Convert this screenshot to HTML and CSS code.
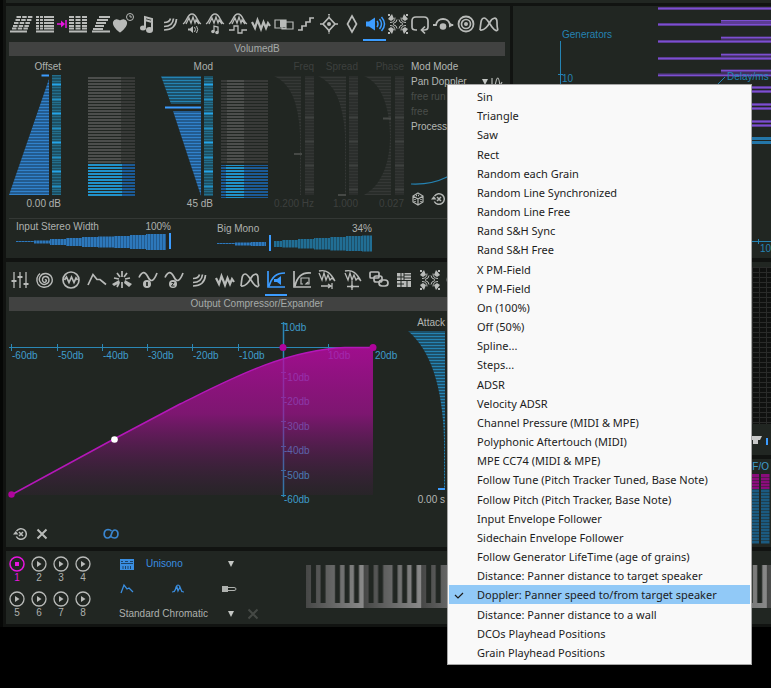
FILE: index.html
```html
<!DOCTYPE html>
<html lang="en">
<head>
<meta charset="utf-8">
<title>Granular Synthesizer</title>
<link rel="stylesheet" href="styles.css">
</head>
<body>
<svg class="defs" aria-hidden="true">
  <defs>
    <pattern id="p-blue" width="60" height="3" patternUnits="userSpaceOnUse"><rect width="60" height="3" fill="#235b8f"/><rect width="60" height="1" fill="#3182cc"/></pattern>
    <pattern id="p-teal" width="60" height="3" patternUnits="userSpaceOnUse"><rect width="60" height="3" fill="#1d5069"/><rect width="60" height="1" fill="#2583b3"/></pattern>
    <pattern id="p-bar" width="10" height="29" patternUnits="userSpaceOnUse"><rect width="10" height="29" fill="#1d5063"/><path d="M0 1.500H10M0 4.500H10M0 7.500H10M0 13.500H10M0 16.500H10M0 19.500H10M0 22.500H10M0 28.500H10" stroke="#236e8c"/><path d="M0 10.500H10" stroke="#25a5e8" stroke-width="2"/><path d="M0 25.500H10" stroke="#2290c4" stroke-width="2"/></pattern>
    <pattern id="p-dim" width="60" height="3" patternUnits="userSpaceOnUse"><rect width="60" height="3" fill="#292d2a"/><rect width="60" height="1" fill="#353836"/></pattern>
    <pattern id="p-dimbar" width="10" height="24" patternUnits="userSpaceOnUse"><rect width="10" height="24" fill="#2b2e2c"/><path d="M0 1.500H10M0 4.500H10M0 7.500H10M0 10.500H10M0 13.500H10M0 16.500H10M0 22.500H10" stroke="#333634"/><path d="M0 19.500H10" stroke="#3e413f" stroke-width="2"/></pattern>
    <pattern id="p-gray" width="60" height="3" patternUnits="userSpaceOnUse"><rect width="60" height="2" fill="#4c4e4c"/></pattern>
    <pattern id="p-gray2" width="60" height="3" patternUnits="userSpaceOnUse"><rect width="60" height="2" fill="#383a38"/></pattern>
    <pattern id="p-lit" width="60" height="3" patternUnits="userSpaceOnUse"><rect width="60" height="2" fill="#2191c9"/></pattern>
    <pattern id="p-lit2" width="60" height="3" patternUnits="userSpaceOnUse"><rect width="60" height="2" fill="#1b5a96"/></pattern>
    <pattern id="p-vblue" width="3" height="20" patternUnits="userSpaceOnUse"><rect width="3" height="20" fill="#235b8f"/><rect width="2" height="20" fill="#2d78bb"/></pattern>
    <pattern id="p-vteal" width="3" height="20" patternUnits="userSpaceOnUse"><rect width="3" height="20" fill="#1d5069"/><rect width="2" height="20" fill="#216e94"/></pattern>
    <pattern id="p-keys" width="57.600" height="43" patternUnits="userSpaceOnUse">
      <rect width="58" height="43" fill="url(#keyshade)"/>
      <path d="M5 0h5v38h-5zM14.500 0h5v38h-5zM29 0h5v38h-5zM38.500 0h5v38h-5zM48 0h5v38h-5z" fill="#212622"/>
    </pattern>
    <linearGradient id="keyshade"><stop offset="0" stop-color="#464746"/><stop offset="1" stop-color="#8a8a8a"/></linearGradient>
    <linearGradient id="fillfade" x1="0" y1="0" x2="0" y2="1"><stop offset="0" stop-color="#bf08a8" stop-opacity=".8"/><stop offset=".45" stop-color="#a80f95" stop-opacity=".68"/><stop offset="1" stop-color="#5a1a58" stop-opacity=".12"/></linearGradient>
    <pattern id="p-cells" width="7" height="5" patternUnits="userSpaceOnUse"><rect width="7" height="5" fill="#101110"/><path d="M0 .5H7M1.500 0V5" stroke="#2a2b2a"/></pattern>

    <symbol id="i-slant" viewBox="0 0 24 22"><path d="M7.500 4h16M6.500 7h16M5 10h16M4 13h16M3 15.500h16" stroke-width="1.800" stroke-dasharray="4.500 1.200"/><path d="M1 18.500h17" stroke-width="2"/></symbol>
    <symbol id="i-rows" viewBox="0 0 24 22"><path d="M3 4h18M3 7h18M3 10h18M3 13h18M3 15.500h18" stroke-width="1.800" stroke-dasharray="3 1 3 1 10 0"/><path d="M3 18.500h18" stroke-width="2"/></symbol>
    <symbol id="i-arrowin" viewBox="0 0 10 22"><path d="M0 11h6M9 7v8" stroke-width="1.500"/><path d="M4 7.500v7l4-3.500z" fill="currentColor" stroke="none"/></symbol>
    <symbol id="i-cells" viewBox="0 0 24 22"><path d="M3 4h18M3 7h18M3 10h18M3 13h18M3 15.500h18" stroke-width="1.800" stroke-dasharray="5 1.500"/><path d="M3 18.500h18" stroke-width="2"/></symbol>
    <symbol id="i-shear" viewBox="0 0 24 22"><path d="M10 4h11M8 7h11M7 10h10M6 13h9M4 16h10M3 18.500h18" stroke-width="1.800"/></symbol>
    <symbol id="i-heart" viewBox="0 0 24 22"><path d="M8 18.500C-3 10 3 4.500 8 8.500 13 4.500 19 10 8 18.500z" fill="currentColor"/><circle cx="18" cy="4" r="3.500" stroke-width="1"/><path d="M18 2v2h2" stroke-width="1"/></symbol>
    <symbol id="i-note" viewBox="0 0 24 22"><path d="M10 14V4l7 2v11M10 7l7 2" stroke-width="2"/><ellipse cx="8" cy="15" rx="3" ry="2.500" fill="currentColor" stroke="none"/><ellipse cx="14.500" cy="17" rx="3.500" ry="3" fill="currentColor" stroke="none"/></symbol>
    <symbol id="i-waves" viewBox="0 0 24 22"><path d="M6 9.500c4 0 6-2 6.500-4M6 13.500c6 0 9-3 9.500-8M6 17c9 0 12-5 12.500-11"/></symbol>
    <symbol id="i-moda" viewBox="0 0 24 22"><path d="M3 11C7 9 7 1 12 1s5 8 9 10M6 11l3-6 2 5 2-6 2 6 1-3 3 4" stroke-width="1.300"/><path d="M8 15.500h2l3-2.500v7l-3-2.500H8z" fill="currentColor" stroke="none"/><path d="M14.500 14q2 2.500 0 5M16.500 13q2.500 3.500 0 7" stroke-width="1"/></symbol>
    <symbol id="i-modb" viewBox="0 0 24 22"><path d="M3 11C7 9 7 1 12 1s5 8 9 10M6 11l3-6 2 5 2-6 2 6 1-3 3 4M11 18v-5l4 1v5" stroke-width="1.300"/><circle cx="10" cy="18.500" r="1.800" fill="currentColor" stroke="none"/><circle cx="14" cy="19.500" r="1.800" fill="currentColor" stroke="none"/></symbol>
    <symbol id="i-modc" viewBox="0 0 24 22"><path d="M3 11C7 9 7 1 12 1s5 8 9 10M6 11l3-6 2 5 2-6 2 6 1-3 3 4M3 17h5v-4h4v7h4v-3h5" stroke-width="1.300"/></symbol>
    <symbol id="i-zig" viewBox="0 0 24 22"><path d="M3 9l3 6 2.500-8L12 16l2.500-7 2.500 6 2-5 2 3" stroke-width="2.200"/></symbol>
    <symbol id="i-blend" viewBox="0 0 24 22"><path d="M3 7h11v8H3zM10 9h11v7H10z" stroke-width="1.200"/><path d="M8 7h6v7H8z" fill="currentColor" stroke="none"/></symbol>
    <symbol id="i-steps" viewBox="0 0 24 22"><path d="M4 17h4v-4h4V9h4V5h4"/></symbol>
    <symbol id="i-target" viewBox="0 0 24 22"><path d="M12 4.500l6 6.500-6 6.500L6 11zM3 11h3M18 11h3"/><path d="M12 1v3M12 18v3" stroke-dasharray="1.500 1"/><circle cx="12" cy="11" r="2" fill="currentColor" stroke="none"/></symbol>
    <symbol id="i-diamond" viewBox="0 0 24 22"><path d="M12 3l4.500 8L12 19l-4.500-8z"/></symbol>
    <symbol id="i-speaker" viewBox="0 0 24 22"><path d="M3 8.500h3l6-4v13l-6-4H3z" fill="currentColor" stroke="none"/><path d="M14 8q2 3 0 6M16.500 6q4 5 0 10M18.500 4q6 7 0 14" stroke-width="1.500"/></symbol>
    <symbol id="i-quad" viewBox="0 0 24 22"><g id="corner"><path d="M2 6l4-5 2 5-3 2zM2 1h2v2H2z" fill="currentColor" stroke="none"/><path d="M4 9.500q5 0 5-5M7 10.500q4-1 4-4" stroke-width="1"/></g><use href="#corner" transform="matrix(-1 0 0 1 24 0)"/><use href="#corner" transform="matrix(1 0 0 -1 0 22)"/><use href="#corner" transform="matrix(-1 0 0 -1 24 22)"/></symbol>
    <symbol id="i-loop" viewBox="0 0 24 22"><path d="M9 17H8c-3 0-4-1-4-3V8c0-3 1-4 4-4h8c3 0 4 1 4 4v6c0 2-1 3-4 3h-2M17 13.500L13.500 17l3.500 3.500"/></symbol>
    <symbol id="i-hop" viewBox="0 0 24 22"><path d="M2 12h3c1-8 13-8 14 0h3" stroke-width="1.800"/><circle cx="12" cy="13.500" r="3.300" fill="currentColor" stroke="none"/><path d="M18 9.500l5 2.500-5 2.500z" fill="currentColor" stroke="none"/></symbol>
    <symbol id="i-disc" viewBox="0 0 24 22"><circle cx="12" cy="11" r="7.500" stroke-width="1.800"/><circle cx="12" cy="11" r="4.500"/><circle cx="12" cy="11" r="2" fill="currentColor" stroke="none"/></symbol>
    <symbol id="i-bows" viewBox="0 0 24 22"><path d="M3 17C4 9 4 5 7 5s5 5 8 9 5 4 6 3M3 17c4 1 8-4 10-8s7-6 7 0 0 6 1 8"/></symbol>
    <symbol id="i-faders" viewBox="0 0 24 22"><path d="M6 3v16M12 3v16M18 3v16" stroke-width="1.300"/><path d="M3.500 12h5M9.500 8h5M15.500 15h5" stroke-width="2"/></symbol>
    <symbol id="i-spiral" viewBox="0 0 24 22"><path d="M12 11c1-1 2 0 1 1.500-1.500 2-4 0-3.500-2.500.7-3.500 6-3.500 6.500.7.400 4-5 6.300-8 3.300C4 10 8 4 13 4.500c6 .7 8 7 4.500 11-3.500 4-10 3.500-12.500-.5-2-4-1-8 2-10.500" stroke-width="1.400"/></symbol>
    <symbol id="i-wavecircle" viewBox="0 0 24 22"><circle cx="12" cy="11" r="8"/><path d="M5.500 11l2-3 2.500 5.500L12.500 8l2.500 5.500L17 9l1.500 2" stroke-width="1.700"/></symbol>
    <symbol id="i-env" viewBox="0 0 24 22"><path d="M3 16L8 5.500l4 5h3l6 5"/></symbol>
    <symbol id="i-burst" viewBox="0 0 24 22"><path d="M12 2v6M7 4l3 4M17 4l-3 4M4 9l5 1M20 9l-5 1M12 13v6M9 14l-2 4"/><path d="M2 15l7-4 1 3-6 3zM22 15l-7-4-1 3 5 4z" fill="currentColor" stroke="none"/></symbol>
    <symbol id="i-lfo" viewBox="0 0 24 22"><path d="M3 8.500C6 2 9 2 12 8s6 4 9-4"/><circle cx="11" cy="15" r="4" fill="currentColor" stroke="none"/><path d="M11 13v4" stroke="#212622"/></symbol>
    <symbol id="i-lfo2" viewBox="0 0 24 22"><path d="M3 8.500C6 2 9 2 12 8s6 4 9-4"/><circle cx="11" cy="15" r="4" fill="currentColor" stroke="none"/><path d="M9.500 13.500h2.500l-2.500 3.500h3" stroke="#212622" stroke-width="1"/></symbol>
    <symbol id="i-comp" viewBox="0 0 24 22"><path d="M4 2v16h17M5 17C8 8 12 4 21 4"/><path d="M10 10h3l4-3v9l-4-3h-3z" fill="currentColor" stroke="none"/></symbol>
    <symbol id="i-comploop" viewBox="0 0 24 22"><path d="M4 2v16h17M5 17C7 8 12 3 21 4"/><path d="M13 15h-2V9h8v6h-3l2-2" stroke-width="1.200"/></symbol>
    <symbol id="i-shift" viewBox="0 0 24 22"><path d="M4 4l3 7 2-7 2 7 2-5 2 5 2-2 3 3M4 2c8-2 12 3 16 10" stroke-width="1.300"/><path d="M6 17h10M17 14v6M13 15l3 2-3 2" stroke-width="1.300"/></symbol>
    <symbol id="i-center" viewBox="0 0 24 22"><path d="M4 4l3 7 2-7 2 7 2-5 2 5 2-2 3 3M4 2c8-2 12 3 16 10M6 17.500h12M11 12v9" stroke-width="1.300"/><path d="M9 17.500l2-2 2 2-2 2z" fill="currentColor" stroke="none"/></symbol>
    <symbol id="i-links" viewBox="0 0 24 22"><rect x="3" y="3" width="9" height="6" rx="1"/><rect x="7" y="7" width="8" height="6" rx="2"/><rect x="12" y="11" width="9" height="6" rx="3"/></symbol>
    <symbol id="i-matrix" viewBox="0 0 24 22"><path d="M5 4h14v14H5z" fill="currentColor" stroke="none"/><path d="M9 4v14M12 4v7M5 8h7M12 6h7M12 9h7M5 11.500h14M5 15h7M15 12v6" stroke="#212622" stroke-width="1"/></symbol>
    <symbol id="i-dice" viewBox="0 0 14 14"><path d="M7 1l5 3v6l-5 3-5-3V4zM2 4l5 3 5-3M7 7v6" stroke-width="1.200"/><path d="M4 7v4M10 7v4M5 3.500h4" stroke-width="1.500" stroke-dasharray="1 1"/></symbol>
    <symbol id="i-reset" viewBox="0 0 14 14"><path d="M3.300 9.500A5.300 5.300 0 1 0 3.500 4.200M6 5l4 4M10 5l-4 4" stroke-width="1.500"/><path d="M0 7.500L2.800 4l2.700 3.500z" fill="currentColor" stroke="none"/></symbol>
    <symbol id="i-x" viewBox="0 0 14 14"><path d="M2.500 2.500l9 9M11.500 2.500l-9 9" stroke-width="2"/></symbol>
    <symbol id="i-chain" viewBox="0 0 16 14"><path d="M8.500 4C7.500 2.800 6.500 2.500 5 2.500 0 3 0 11 4.500 11c3 0 3.500-2 4-4s1-4 3.500-4c4 0 4 8-.500 8-1.500 0-2.500-.3-3.500-1.500" stroke-width="1.700"/></symbol>
    <symbol id="i-play" viewBox="0 0 16 16"><circle cx="8" cy="8" r="7" stroke-width="1.300"/><path d="M6 5l4.500 3L6 11z" fill="currentColor" stroke="none"/></symbol>
    <symbol id="i-stop" viewBox="0 0 16 16"><circle cx="8" cy="8" r="7" stroke-width="1.500"/><path d="M6 6h4v4H6z" fill="currentColor" stroke="none"/></symbol>
    <symbol id="i-down" viewBox="0 0 8 8"><path d="M1 1h6L4 7z" fill="currentColor" stroke="none"/></symbol>
    <symbol id="i-synth" viewBox="0 0 16 14"><path d="M1 2h14v11H1z" fill="currentColor" stroke="none"/><path d="M2 4.500h2M6 4.500h3M11 4.500h3M2 6.500h12M4 9v3M6.500 9v3M9 9v3M11.500 9v3" stroke="#1d4468" stroke-width="1"/></symbol>
    <symbol id="i-envs" viewBox="0 0 16 14"><path d="M2 11l3-8 3 4 2-1 4 4" stroke-width="1.300"/></symbol>
    <symbol id="i-mods" viewBox="0 0 16 14"><path d="M2 10q3 0 4-5 2-4 4 0 1 5 4 5M4 10l3-5 1 4 2-4 2 5" stroke-width="1.200"/></symbol>
    <symbol id="i-toggle" viewBox="0 0 16 14"><path d="M1 4h6v6H1z" fill="currentColor" stroke="none"/><path d="M7 5.500h6q2 0 2 1.500t-2 1.500H7" stroke-width="1"/></symbol>
  </defs>
</svg>

<main class="app">
  <div class="strip"></div>
  <div class="racks">
    <div class="col">
      <section class="panel">
        <nav class="tools" aria-label="Modulation targets">
          <button aria-label="Slant grid"><svg class="ic"><use href="#i-slant"/></svg></button>
          <button class="wide" aria-label="Row input"><svg class="ic"><use href="#i-rows"/></svg><svg class="ic-in"><use href="#i-arrowin"/></svg></button>
          <button aria-label="Cells"><svg class="ic"><use href="#i-cells"/></svg></button>
          <button aria-label="Shear"><svg class="ic"><use href="#i-shear"/></svg></button>
          <button aria-label="Life time"><svg class="ic"><use href="#i-heart"/></svg></button>
          <button aria-label="Pitch"><svg class="ic"><use href="#i-note"/></svg></button>
          <button aria-label="Waves"><svg class="ic"><use href="#i-waves"/></svg></button>
          <button aria-label="Grain volume"><svg class="ic"><use href="#i-moda"/></svg></button>
          <button aria-label="Grain pitch"><svg class="ic"><use href="#i-modb"/></svg></button>
          <button aria-label="Grain pulse"><svg class="ic"><use href="#i-modc"/></svg></button>
          <button aria-label="Noise"><svg class="ic"><use href="#i-zig"/></svg></button>
          <button aria-label="Blend"><svg class="ic"><use href="#i-blend"/></svg></button>
          <button aria-label="Steps"><svg class="ic"><use href="#i-steps"/></svg></button>
          <button aria-label="Position"><svg class="ic"><use href="#i-target"/></svg></button>
          <button aria-label="Diamond"><svg class="ic"><use href="#i-diamond"/></svg></button>
          <button class="on" aria-label="Volume"><svg class="ic"><use href="#i-speaker"/></svg></button>
          <button aria-label="Surround"><svg class="ic"><use href="#i-quad"/></svg></button>
          <button aria-label="Loop"><svg class="ic"><use href="#i-loop"/></svg></button>
          <button aria-label="Jump"><svg class="ic"><use href="#i-hop"/></svg></button>
          <button aria-label="Disc"><svg class="ic"><use href="#i-disc"/></svg></button>
          <button aria-label="Crossfade"><svg class="ic"><use href="#i-bows"/></svg></button>
        </nav>
        <h2 class="title">VolumedB</h2>
        <div class="channels">
          <div class="chan w52">
            <label for="offset">Offset</label>
            <div class="ctl">
              <svg width="52" height="122"><path d="M40 5v116H0z" fill="url(#p-blue)"/><path d="M32.500 1.500H40" stroke="#3c9cff" stroke-width="2"/><path d="M43 1h9v120h-9z" fill="url(#p-bar)"/></svg>
              <input id="offset" type="range">
            </div>
            <output>0.00 dB</output>
          </div>
          <div class="chan w47 meter">
            <svg width="47" height="122"><path d="M0 3h33v86H0z" fill="url(#p-gray)"/><path d="M33 3h14v86H33z" fill="url(#p-gray2)"/><path d="M0 90h34v33H0z" fill="url(#p-lit)"/><path d="M34 90h13v33H34z" fill="url(#p-lit2)"/></svg>
          </div>
          <div class="chan w52">
            <label for="mod">Mod</label>
            <div class="ctl">
              <svg width="52" height="122"><path d="M0 2h40v28H10z" fill="url(#p-teal)"/><path d="M4 33.500h36" stroke="#3c9cff" stroke-width="2"/><path d="M12 37h28v85z" fill="url(#p-blue)"/><path d="M43 2h9v120h-9z" fill="url(#p-bar)"/></svg>
              <input id="mod" type="range">
            </div>
            <output>45 dB</output>
          </div>
          <div class="chan w47 meter">
            <svg width="47" height="124"><path d="M0 5h47v85H0z" fill="url(#p-gray2)"/><path d="M6 5h17v85H6z" fill="url(#p-gray)"/><path d="M0 91h47v33H0z" fill="url(#p-lit2)"/><path d="M5 91h18v33H5z" fill="url(#p-lit)"/></svg>
          </div>
          <div class="chan w40 off">
            <label for="freq">Freq</label>
            <div class="ctl">
              <svg width="40" height="122"><path d="M0 2h27v119h-1V60Q24 12 0 2z" fill="url(#p-dim)"/><path d="M20 80h8" stroke="#464946" stroke-width="2"/><path d="M31 2h9v119h-9z" fill="url(#p-dimbar)"/></svg>
              <input id="freq" type="range" disabled>
            </div>
            <output>0.200 Hz</output>
          </div>
          <div class="chan w40 off">
            <label for="spread">Spread</label>
            <div class="ctl">
              <svg width="40" height="122"><path d="M0 2h28v119h-1V60Q24 12 0 2z" fill="url(#p-dim)"/><path d="M20 121h8" stroke="#464946" stroke-width="2"/><path d="M31 2h9v119h-9z" fill="url(#p-dimbar)"/></svg>
              <input id="spread" type="range" disabled>
            </div>
            <output>1.000</output>
          </div>
          <div class="chan w40 off">
            <label for="phase">Phase</label>
            <div class="ctl">
              <svg width="40" height="122"><path d="M0 2h27v119H0C20 110 26 85 26 62S20 10 0 2z" fill="url(#p-dim)"/><path d="M19 44.500h8" stroke="#464946" stroke-width="2"/><path d="M31 2h9v119h-9z" fill="url(#p-dimbar)"/></svg>
              <input id="phase" type="range" disabled>
            </div>
            <output>0.027</output>
          </div>
          <div class="mode">
            <label for="modmode">Mod Mode</label>
            <div class="line"><select id="modmode"><option>Pan Doppler</option></select><svg class="down"><use href="#i-down"/></svg><svg class="mini" viewBox="0 0 12 10"><path d="M1 1v8M4 9q3-16 5 0l2-4" stroke-width="1.200"/></svg></div>
            <button class="faint" disabled>free run</button>
            <button class="faint" disabled>free</button>
            <button>Process</button>
            <svg class="curve" viewBox="0 0 90 56"><path d="M0 50q20 1 36-7T80 10" stroke="#2583b3" stroke-width="1.200"/></svg>
            <div class="line acts">
              <button aria-label="Randomize"><svg class="sm"><use href="#i-dice"/></svg></button>
              <button aria-label="Reset"><svg class="sm"><use href="#i-reset"/></svg></button>
            </div>
            <ul class="menu" role="menu">
              <li><button role="menuitem">Sin</button></li>
              <li><button role="menuitem">Triangle</button></li>
              <li><button role="menuitem">Saw</button></li>
              <li><button role="menuitem">Rect</button></li>
              <li><button role="menuitem">Random each Grain</button></li>
              <li><button role="menuitem">Random Line Synchronized</button></li>
              <li><button role="menuitem">Random Line Free</button></li>
              <li><button role="menuitem">Rand S&amp;H Sync</button></li>
              <li><button role="menuitem">Rand S&amp;H Free</button></li>
              <li><button role="menuitem">X PM-Field</button></li>
              <li><button role="menuitem">Y PM-Field</button></li>
              <li><button role="menuitem">On (100%)</button></li>
              <li><button role="menuitem">Off (50%)</button></li>
              <li><button role="menuitem">Spline...</button></li>
              <li><button role="menuitem">Steps...</button></li>
              <li><button role="menuitem">ADSR</button></li>
              <li><button role="menuitem">Velocity ADSR</button></li>
              <li><button role="menuitem">Channel Pressure (MIDI &amp; MPE)</button></li>
              <li><button role="menuitem">Polyphonic Aftertouch (MIDI)</button></li>
              <li><button role="menuitem">MPE CC74 (MIDI &amp; MPE)</button></li>
              <li><button role="menuitem">Follow Tune (Pitch Tracker Tuned, Base Note)</button></li>
              <li><button role="menuitem">Follow Pitch (Pitch Tracker, Base Note)</button></li>
              <li><button role="menuitem">Input Envelope Follower</button></li>
              <li><button role="menuitem">Sidechain Envelope Follower</button></li>
              <li><button role="menuitem">Follow Generator LifeTime (age of grains)</button></li>
              <li><button role="menuitem">Distance: Panner distance to target speaker</button></li>
              <li><button role="menuitem" class="picked"><svg class="tick" viewBox="0 0 10 10"><path d="M1 5l3 3 5-5" stroke-width="1.200"/></svg>Doppler: Panner speed to/from target speaker</button></li>
              <li><button role="menuitem">Distance: Panner distance to a wall</button></li>
              <li><button role="menuitem">DCOs Playhead Positions</button></li>
              <li><button role="menuitem">Grain Playhead Positions</button></li>
            </ul>
          </div>
        </div>
        <div class="widths">
          <div class="wide-ctl">
            <div class="pair"><label for="stereo">Input Stereo Width</label><output>100%</output></div>
            <div class="ctl">
              <svg width="156" height="18"><path d="M0 8h18v-.5h16V6h16V5h16V4h16V3.500h16V3h16V2h16V1h20v16h-20v-1h-16v-1H98v-.5H82V14H66v-1H50v-1H34v-1.500H18V9H0z" fill="url(#p-vblue)"/><path d="M154 0v16" stroke="#3c9cff" stroke-width="2"/></svg>
              <input id="stereo" type="range">
            </div>
          </div>
          <div class="wide-ctl low">
            <div class="pair"><label for="mono">Big Mono</label><output>34%</output></div>
            <div class="ctl">
              <svg width="156" height="18"><path d="M0 8h18v-.5h16V7h15v4H34v-.5H18V9H0z" fill="url(#p-vblue)"/><path d="M53 0v16" stroke="#3c9cff" stroke-width="2"/><path d="M57 6h8V5h16V4h16V3h16V2h16V1h16V.500h10v16h-10V16h-16v-.5h-16v-1H97v-1H81v-1H65V12h-8z" fill="url(#p-vteal)"/></svg>
              <input id="mono" type="range">
            </div>
          </div>
        </div>
      </section>

      <section class="panel lower">
        <nav class="tools fx" aria-label="Effects">
          <button aria-label="Mixer"><svg class="ic"><use href="#i-faders"/></svg></button>
          <button aria-label="Spiral"><svg class="ic"><use href="#i-spiral"/></svg></button>
          <button aria-label="Oscillator"><svg class="ic"><use href="#i-wavecircle"/></svg></button>
          <button aria-label="Envelope"><svg class="ic"><use href="#i-env"/></svg></button>
          <button aria-label="Burst"><svg class="ic"><use href="#i-burst"/></svg></button>
          <button aria-label="LFO 1"><svg class="ic"><use href="#i-lfo"/></svg></button>
          <button aria-label="LFO 2"><svg class="ic"><use href="#i-lfo2"/></svg></button>
          <button aria-label="Waves"><svg class="ic"><use href="#i-waves"/></svg></button>
          <button aria-label="Noise"><svg class="ic"><use href="#i-zig"/></svg></button>
          <button aria-label="Crossfade"><svg class="ic"><use href="#i-bows"/></svg></button>
          <button class="on" aria-label="Output compressor"><svg class="ic"><use href="#i-comp"/></svg></button>
          <button aria-label="Loop compressor"><svg class="ic"><use href="#i-comploop"/></svg></button>
          <button aria-label="Shift"><svg class="ic"><use href="#i-shift"/></svg></button>
          <button aria-label="Center"><svg class="ic"><use href="#i-center"/></svg></button>
          <button aria-label="Links"><svg class="ic"><use href="#i-links"/></svg></button>
          <button aria-label="Matrix"><svg class="ic"><use href="#i-matrix"/></svg></button>
          <button aria-label="Surround"><svg class="ic"><use href="#i-quad"/></svg></button>
          <button aria-label="Disc"><svg class="ic"><use href="#i-disc"/></svg></button>
          <button aria-label="Loop"><svg class="ic"><use href="#i-loop"/></svg></button>
        </nav>
        <h2 class="title">Output Compressor/Expander</h2>
        <div class="dynamics">
          <svg class="graph" viewBox="6 311 396 196">
            <g stroke="#2b87b5"><path d="M9 347.500H373M11.500 344v7M57.500 344v7M102.500 344v7M147.500 344v7M192.500 344v7M238.500 344v7M328.500 344v7"/><path d="M283.500 322V497" stroke-width="1.500"/><path d="M281 323.500h5M281 372.500h5M281 397.500h5M281 421.500h5M281 446.500h5M281 470.500h5M281 495.500h5"/></g>
            <g class="axis"><text x="12" y="359">-60db</text><text x="58" y="359">-50db</text><text x="103" y="359">-40db</text><text x="148" y="359">-30db</text><text x="193" y="359">-20db</text><text x="239" y="359">-10db</text><text x="328" y="359">10db</text><text x="375" y="359">20db</text><text x="284" y="331">10db</text><text x="284" y="381">-10db</text><text x="284" y="405">-20db</text><text x="284" y="430">-30db</text><text x="284" y="454">-40db</text><text x="284" y="479">-50db</text><text x="284" y="503">-60db</text></g>
            <path d="M11 495L114 439 180 404C225 382 283 350 345 347.500H373V495z" fill="url(#fillfade)" stroke="none"/>
            <path d="M11 495L114 439 180 404C225 382 283 350 345 347.500H373" stroke="#b417b8" stroke-width="1.500"/>
            <g fill="#b0049c" stroke="none"><circle cx="11.500" cy="494.500" r="3.200"/><circle cx="283" cy="347.500" r="3.500"/><circle cx="373" cy="347.500" r="3.500"/></g>
            <circle cx="114.500" cy="439.500" r="3.300" fill="#fff" stroke="none"/>
          </svg>
          <div class="attack">
            <label for="attack">Attack</label>
            <div class="ctl">
              <svg width="37" height="162"><path d="M0 1h37v159h-1V110Q34 30 0 1z" fill="url(#p-teal)"/><path d="M30 159h7" stroke="#3c9cff" stroke-width="2"/></svg>
              <input id="attack" type="range">
            </div>
            <output>0.00 s</output>
          </div>
        </div>
        <div class="foot">
          <button aria-label="Reset curve"><svg class="sm"><use href="#i-reset"/></svg></button>
          <button aria-label="Clear curve"><svg class="sm"><use href="#i-x"/></svg></button>
          <button class="link" aria-label="Link"><svg class="md"><use href="#i-chain"/></svg></button>
        </div>
      </section>
    </div>

    <div class="col side">
      <section class="panel">
        <svg class="view" viewBox="513 6 258 252">
          <g stroke="#5c3c94" stroke-width="3"><path d="M658 8.500H771M658 24.500H771M658 41.500H771M658 58.500H771M658 75H771M721 21.500H771M721 38H771M721 55H771M721 71H771M721 87.500H771M721 91.500H771M721 104.500H771M721 108.500H771M721 121.500H771M721 125.500H771"/></g>
          <g stroke="#7c4fd0"><path d="M658 8.500H771M658 24.500H771M658 41.500H771M658 58.500H771M658 75.500H771M721 20.500H771M721 37.500H771M721 54.500H771M721 70.500H771M721 87.500H771M721 91.500H771M721 104.500H771M721 108.500H771M721 121.500H771M721 125.500H771"/></g>
          <path d="M721 138.500H771M721 142.500H771" stroke="#2476a8" stroke-width="3"/>
          <path d="M560.500 41V241.500H771M558 74.500h5M758.500 239v5M725 77L560 241" stroke="#2583b3"/>
          <g class="axis dimax"><text x="562" y="38">Generators</text><text x="562" y="82">10</text><text x="727" y="80">Delay/ms</text><text x="760" y="252">10</text></g>
        </svg>
      </section>
      <section class="panel lower matrix">
        <svg class="cells" aria-hidden="true"><rect width="100%" height="100%" fill="url(#p-cells)"/></svg>
        <div class="out"><svg width="20" height="14" viewBox="0 0 20 14"><path d="M0 1h11l-2 4H7v4H2V5H0z" fill="#c8c8c8" stroke="none"/><path d="M16 3v7" stroke="#3c9cff" stroke-width="2"/></svg></div>
      </section>
      <section class="panel levels">
        <span class="fo">F/O</span>
        <svg width="24" height="70"><path d="M0 0h24v15H0z" fill="#8a0c7c"/><path d="M0 15h24v55H0z" fill="#1b5a80"/><path d="M0 3.500h24M0 6.500h24M0 9.500h24M0 12.500h24M0 15.500h24M0 18.500h24M0 21.500h24M0 24.500h24M0 27.500h24M0 30.500h24M0 33.500h24M0 36.500h24M0 39.500h24M0 42.500h24M0 45.500h24M0 48.500h24M0 51.500h24M0 54.500h24M0 57.500h24M0 60.500h24M0 63.500h24M0 66.500h24M0 69.500h24" stroke="#212622" stroke-opacity=".5" stroke-width="1"/><path d="M13 0v70M23.500 0v70" stroke="#212622" stroke-width="2"/></svg>
      </section>
    </div>
  </div>

  <section class="panel bottom">
    <div class="slots">
      <button class="live"><svg class="play"><use href="#i-stop"/></svg>1</button>
      <button><svg class="play"><use href="#i-play"/></svg>2</button>
      <button><svg class="play"><use href="#i-play"/></svg>3</button>
      <button><svg class="play"><use href="#i-play"/></svg>4</button>
      <button><svg class="play"><use href="#i-play"/></svg>5</button>
      <button><svg class="play"><use href="#i-play"/></svg>6</button>
      <button><svg class="play"><use href="#i-play"/></svg>7</button>
      <button><svg class="play"><use href="#i-play"/></svg>8</button>
    </div>
    <div class="voice">
      <div class="row blue"><svg class="md"><use href="#i-synth"/></svg><select aria-label="Voice mode"><option>Unisono</option></select><svg class="down"><use href="#i-down"/></svg></div>
      <div class="row trio"><button class="bl" aria-label="Envelope"><svg class="md"><use href="#i-envs"/></svg></button><button class="bl" aria-label="Grain"><svg class="md"><use href="#i-mods"/></svg></button><button aria-label="Portamento"><svg class="md"><use href="#i-toggle"/></svg></button></div>
      <div class="row"><select aria-label="Scale"><option>Standard Chromatic</option></select><svg class="down"><use href="#i-down"/></svg><button class="clear" aria-label="Clear scale"><svg class="sm"><use href="#i-x"/></svg></button></div>
    </div>
    <svg class="keys" role="img" aria-label="Keyboard"><rect width="100%" height="43" fill="url(#p-keys)"/></svg>
  </section>
</main>
</body>
</html>
```
FILE: styles.css
```css
* { box-sizing: border-box; }

body {
  margin: 0;
  min-height: 100vh;
  background: #000;
  color: #aeb1ae;
  font: 10px/15px "Liberation Sans", Arial, sans-serif;
}

.defs { position: absolute; width: 0; height: 0; }

svg { display: block; fill: none; stroke: currentColor; stroke-width: 1.7px; }
svg:not([class]) { stroke: none; }
svg rect[fill^="url"], svg path[fill^="url"] { stroke: none; }
.defs, .graph, .view { stroke-width: 1px; }
symbol { stroke-width: 1.7px; }
pattern rect, pattern path[fill] { stroke: none; }

button, select {
  appearance: none;
  border: 0;
  padding: 0;
  margin: 0;
  background: none;
  color: inherit;
  font: inherit;
  text-align: left;
}

select { outline: 0; min-width: 0; }

.app { padding: 0 0 3px 6px; background: #111311; box-shadow: inset 3px 0 #060706; }
.strip { height: 3px; margin-bottom: 3px; background: #212622; }
.racks { display: grid; grid-template-columns: minmax(0, 504fr) minmax(0, 258fr); gap: 3px; }
.col { display: flex; flex-direction: column; gap: 4px; min-width: 0; }
.panel { background: #212622; }

.tools { display: flex; height: 36px; padding: 0 10px 0 4px; color: #b9bbb9; }
.tools button { flex: 2 1 0; min-width: 0; display: flex; align-items: center; justify-content: center; position: relative; }
.tools .wide { flex-grow: 3; }
.tools .on { color: #3c9cff; }
.tools .on::after { content: ""; position: absolute; inset: auto 0 1px; height: 2px; background: #3c9cff; }
.tools.fx { height: 35px; padding: 0 16px 0 1px; }
.tools.fx .on::after { inset: auto 2px 1px; }
.ic { width: 24px; height: 22px; flex: none; }
.ic-in { width: 10px; height: 22px; flex: none; color: #e815e0; }

.title {
  margin: 0 5px 0 3px;
  height: 14px;
  background: #414241;
  color: #a5aaa8;
  font: 10px/14px "Liberation Sans", Arial, sans-serif;
  text-align: center;
}

.channels {
  display: grid;
  grid-template-columns:
    minmax(0, 79fr) minmax(0, 73fr) minmax(0, 60fr) minmax(0, 53fr)
    minmax(0, 44fr) minmax(0, 46fr) minmax(0, 47fr) minmax(0, 94fr);
  margin: 0 5px 0 3px;
  padding: 3px 0 7px;
  border-bottom: 1px solid #343835;
}
.chan { display: flex; flex-direction: column; text-align: right; }
.chan label, .chan output { white-space: nowrap; }
.w52 { width: 52px; }
.w47 { width: 47px; }
.w40 { width: 40px; }
.meter { padding-top: 15px; }
.off { color: #3d403e; }
.ctl { position: relative; }
.ctl input { position: absolute; inset: 0; width: 100%; height: 100%; margin: 0; opacity: 0; }

.mode { position: relative; display: flex; flex-direction: column; align-items: stretch; color: #b4b7b4; }
.mode select { width: 68px; height: 15px; }
.line { display: flex; align-items: center; gap: 2px; height: 15px; }
.faint { color: #4a4e4b; }
.down { width: 8px; height: 8px; flex: none; color: #c4c7c4; }
.mini { width: 12px; height: 10px; flex: none; }
.curve { width: 90px; height: 56px; }
.acts { gap: 6px; height: 18px; }
.sm { width: 14px; height: 14px; }
.md { width: 16px; height: 14px; }

.menu {
  position: absolute;
  z-index: 5;
  top: 25px;
  left: 36px;
  width: 305px;
  height: 581px;
  margin: 0;
  padding: 2px 1px;
  border: 1px solid #a6a6a6;
  background: #f9f9f9;
  color: #1c1c1c;
  list-style: none;
  display: grid;
  grid-auto-rows: 1fr;
  font: 11px/19px "Noto Sans", "Open Sans", sans-serif;
}
.menu li { display: flex; min-height: 0; }
.menu button { flex: 1; display: flex; align-items: center; padding-left: 28px; white-space: nowrap; position: relative; }
.menu .picked { background: #91c9f7; }
.tick { position: absolute; left: 5px; width: 10px; height: 10px; }

.widths { display: flex; gap: 45px; padding: 0 0 7px 10px; }
.wide-ctl { width: 156px; }
.low { padding-top: 2px; margin-bottom: -2px; }
.pair { display: flex; justify-content: space-between; height: 14px; }
.pair output { padding-right: 1px; }

.dynamics { display: flex; height: 196px; }
.graph { flex: none; width: 396px; height: 196px; }
.axis { font: 10px "Liberation Sans", Arial, sans-serif; fill: #3f9ccb; stroke: none; }
.dimax { fill: #2583b3; }
.attack { width: 43px; padding-top: 4px; text-align: right; white-space: nowrap; color: #b4b7b4; }
.attack .ctl { padding-left: 6px; }
.attack output, .attack label { display: block; }
.foot { display: flex; align-items: center; height: 40px; padding: 14px 0 0 7px; gap: 8px; color: #b9bbb9; }
.foot .link { margin-left: 46px; color: #3a86d0; }

.side { overflow: hidden; }
.side .view { width: 100%; height: 252px; }
.matrix { height: 193px; padding-top: 5px; }
.cells { width: 100%; height: 157px; }
.out { display: flex; justify-content: flex-end; padding-top: 11px; }
.levels { flex: 1; display: flex; flex-direction: column; align-items: flex-end; text-align: right; color: #3f9ccb; }
.fo { padding-right: 2px; }

.bottom { display: flex; height: 73px; margin-top: 4px; }
.slots { display: grid; grid-template-columns: repeat(4, 22px); grid-auto-rows: 35px; padding-top: 5px; margin-right: 24px; }
.slots button { display: flex; flex-direction: column; align-items: center; justify-content: flex-start; line-height: 11px; }
.play { width: 16px; height: 16px; color: #b9bbb9; }
.live, .live .play { color: #e815e0; }
.voice { width: 164px; flex: none; }
.row { display: flex; align-items: center; height: 25px; gap: 11px; padding-left: 1px; }
.row select { flex: none; width: 97px; height: 15px; }
.row.blue .md, .row.blue select, .bl { color: #3a8ee0; }
.row.blue select { width: 70px; }
.trio { gap: 35px; }
.clear { color: #454945; }
.keys { flex: 1; min-width: 0; height: 43px; margin: 14px 0 0 24px; }
```
